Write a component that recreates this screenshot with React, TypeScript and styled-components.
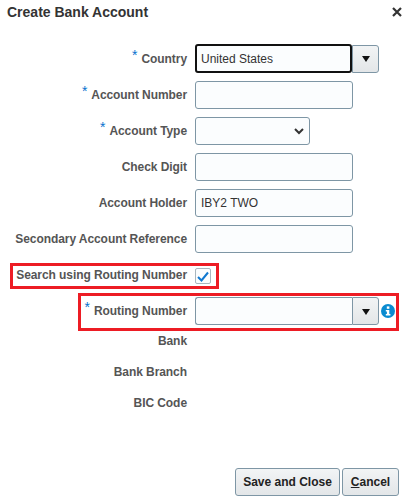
import styled, { createGlobalStyle } from 'styled-components';

const GlobalStyle = createGlobalStyle`
  html, body {
    margin: 0;
    padding: 0;
    background: #fff;
  }
  * {
    box-sizing: border-box;
  }
`;

const Dialog = styled.div`
  position: relative;
  width: 420px;
  height: 503px;
  overflow: hidden;
  background: #fff;
  font-family: 'Liberation Sans', Arial, sans-serif;
  display: flex;
  flex-direction: column;
`;

const Header = styled.div`
  height: 44px;
  padding: 4px 18px 0 7px;
  display: flex;
  justify-content: space-between;
  align-items: flex-start;
`;

const Title = styled.h1`
  margin: 0;
  font-size: 14px;
  line-height: 16px;
  font-weight: 700;
  color: #333;
`;

const CloseIcon = styled.svg`
  width: 10px;
  height: 10px;
  margin-top: 3px;
`;

const Form = styled.div`
  display: flex;
  flex-direction: column;
  gap: 8px;
`;

const Row = styled.div<{ $h?: number }>`
  display: flex;
  align-items: center;
  height: ${(p) => p.$h ?? 28}px;
`;

const Label = styled.label`
  width: 187px;
  margin-right: 8px;
  flex: none;
  text-align: right;
  font-size: 12px;
  font-weight: 700;
  letter-spacing: -0.07px;
  color: #555;
  white-space: nowrap;
`;

const Star = styled.span`
  color: #0572ce;
  font-size: 14px;
  line-height: 0;
  font-weight: 400;
  margin-right: 4px;
  position: relative;
  top: -3px;
`;

const Input = styled.div<{ $focus?: boolean; $w?: number; $join?: boolean }>`
  width: ${(p) => p.$w ?? 158}px;
  height: ${(p) => (p.$focus ? 29 : 28)}px;
  background: #fbfdfe;
  border: ${(p) => (p.$focus ? '2px solid #111' : '1px solid #7e96a5')};
  border-radius: ${(p) => (p.$join ? '3px 0 0 3px' : '3px')};
  ${(p) => (!p.$focus && p.$join ? 'border-right: 0;' : '')}
  padding: 0 ${(p) => (p.$focus ? 4 : 5)}px;
  display: flex;
  align-items: center;
  font-size: 12px;
  color: #333;
`;

const DropButton = styled.div`
  width: 27px;
  height: 28px;
  background: linear-gradient(#f2f4f5, #e3e6e8);
  border: 1px solid #7e96a5;
  border-radius: 0 3px 3px 0;
  display: flex;
  align-items: center;
  justify-content: center;
`;

const Arrow = styled.div`
  width: 0;
  height: 0;
  border-left: 4.5px solid transparent;
  border-right: 4.5px solid transparent;
  border-top: 6px solid #111;
  margin-top: 1px;
`;

const Select = styled(Input)`
  justify-content: flex-end;
  padding-right: 5px;
`;

const Check = styled.div`
  width: 16px;
  height: 16px;
  margin-top: 2px;
  background: #fbfdfe;
  border: 1px solid #a9b6be;
  border-radius: 2px;
  display: flex;
  align-items: center;
  justify-content: center;
`;

const InfoBadge = styled.svg`
  width: 14px;
  height: 14px;
  margin-left: 2px;
`;

const StaticRows = styled.div`
  margin-top: -8px;
  display: flex;
  flex-direction: column;
`;

const Footer = styled.div`
  position: absolute;
  right: 21px;
  bottom: 7px;
  display: flex;
  gap: 2px;
`;

const Button = styled.button<{ $w: number }>`
  width: ${(p) => p.$w}px;
  height: 28px;
  padding: 0;
  background: linear-gradient(#f2f4f5, #e3e6e8);
  border: 1px solid #7e96a5;
  border-radius: 3px;
  font-family: inherit;
  font-size: 12px;
  font-weight: 700;
  color: #222;
  text-align: center;
`;

const Highlight = styled.div<{ $x: number; $y: number; $w: number; $h: number }>`
  position: absolute;
  left: ${(p) => p.$x}px;
  top: ${(p) => p.$y}px;
  width: ${(p) => p.$w}px;
  height: ${(p) => p.$h}px;
  border: 3px solid #ed1c24;
  pointer-events: none;
`;

const App = () => {
  return (
    <Dialog>
      <GlobalStyle />
      <Header>
        <Title>Create Bank Account</Title>
        <CloseIcon viewBox="0 0 10 10">
          <path d="M1 1 L9 9 M9 1 L1 9" stroke="#333" strokeWidth="2.2" fill="none" />
        </CloseIcon>
      </Header>

      <Form>
        <Row $h={29}>
          <Label><Star>*</Star>Country</Label>
          <Input $focus $w={157}>United States</Input>
          <DropButton><Arrow /></DropButton>
        </Row>
        <Row>
          <Label><Star>*</Star>Account Number</Label>
          <Input />
        </Row>
        <Row>
          <Label><Star>*</Star>Account Type</Label>
          <Select $w={115}>
            <svg width="10" height="7" viewBox="0 0 10 7">
              <path d="M1 1 L5 5 L9 1" stroke="#333" strokeWidth="2" fill="none" />
            </svg>
          </Select>
        </Row>
        <Row>
          <Label>Check Digit</Label>
          <Input />
        </Row>
        <Row>
          <Label>Account Holder</Label>
          <Input>IBY2 TWO</Input>
        </Row>
        <Row>
          <Label>Secondary Account Reference</Label>
          <Input />
        </Row>
        <Row>
          <Label>Search using Routing Number</Label>
          <Check>
            <svg width="12" height="11" viewBox="0 0 12 11">
              <path d="M1 6 L4.5 9.5 L11 1.5" stroke="#0f78d0" strokeWidth="2" fill="none" />
            </svg>
          </Check>
        </Row>
        <Row>
          <Label><Star>*</Star>Routing Number</Label>
          <Input $w={157} $join />
          <DropButton><Arrow /></DropButton>
          <InfoBadge viewBox="0 0 14 14">
            <circle cx="7" cy="7" r="7" fill="#0a8bd0" />
            <rect x="5.8" y="2.4" width="2.6" height="2.4" fill="#fff" />
            <path d="M4.8 6 H8.3 V10 H9.4 V11.6 H4.8 V10 H5.9 V7.5 H4.8 Z" fill="#fff" />
          </InfoBadge>
        </Row>
        <StaticRows>
          <Row $h={31}><Label>Bank</Label></Row>
          <Row $h={31}><Label>Bank Branch</Label></Row>
          <Row $h={31}><Label>BIC Code</Label></Row>
        </StaticRows>
      </Form>

      <Footer>
        <Button $w={105}>Save and Close</Button>
        <Button $w={57}><u>C</u>ancel</Button>
      </Footer>

      <Highlight $x={10} $y={263} $w={209} $h={26} />
      <Highlight $x={78} $y={293} $w={321} $h={38} />
    </Dialog>
  );
};

export default App;
